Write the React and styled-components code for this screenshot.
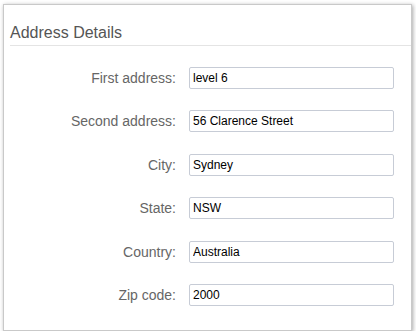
import styled, { createGlobalStyle } from "styled-components";

const GlobalStyle = createGlobalStyle`
  html, body {
    margin: 0;
    padding: 0;
    background: #ffffff;
  }
  body {
    font-family: "Liberation Sans", Arial, sans-serif;
  }
`;

const fields = [
  { label: "First address:", value: "level 6" },
  { label: "Second address:", value: "56 Clarence Street" },
  { label: "City:", value: "Sydney" },
  { label: "State:", value: "NSW" },
  { label: "Country:", value: "Australia" },
  { label: "Zip code:", value: "2000" },
];

export default function App() {
  return (
    <>
      <GlobalStyle />
      <Panel>
        <Heading>Address Details</Heading>
        <Divider />
        <Form>
          {fields.map((field) => (
            <Row key={field.label}>
              <Label>{field.label}</Label>
              <Input type="text" defaultValue={field.value} />
            </Row>
          ))}
        </Form>
      </Panel>
    </>
  );
}

const Panel = styled.div`
  box-sizing: border-box;
  margin: 4px 0 0 3px;
  width: 409px;
  height: 327px;
  background: #ffffff;
  border: 1px solid #c9c9c9;
  box-shadow: 1px 1px 4px rgba(0, 0, 0, 0.35);
`;

const Heading = styled.h2`
  margin: 0;
  padding: 18px 0 2px 6px;
  font-size: 16px;
  line-height: 20px;
  font-weight: normal;
  color: #555555;
`;

const Divider = styled.div`
  height: 1px;
  margin-left: 6px;
  background: #e4e4e4;
`;

const Form = styled.div`
  display: flex;
  flex-direction: column;
  gap: 21.4px;
  padding-top: 21px;
`;

const Row = styled.div`
  display: grid;
  grid-template-columns: 172px 205px;
  column-gap: 13px;
  align-items: center;
`;

const Label = styled.label`
  text-align: right;
  font-size: 14px;
  color: #666666;
`;

const Input = styled.input`
  box-sizing: border-box;
  width: 205px;
  height: 22px;
  margin: 0;
  padding: 0 3px;
  border: 1px solid #c7ccd6;
  border-radius: 2px;
  font-family: "Liberation Sans", Arial, sans-serif;
  font-size: 12px;
  color: #000000;
  background: #ffffff;
  outline: none;
`;
